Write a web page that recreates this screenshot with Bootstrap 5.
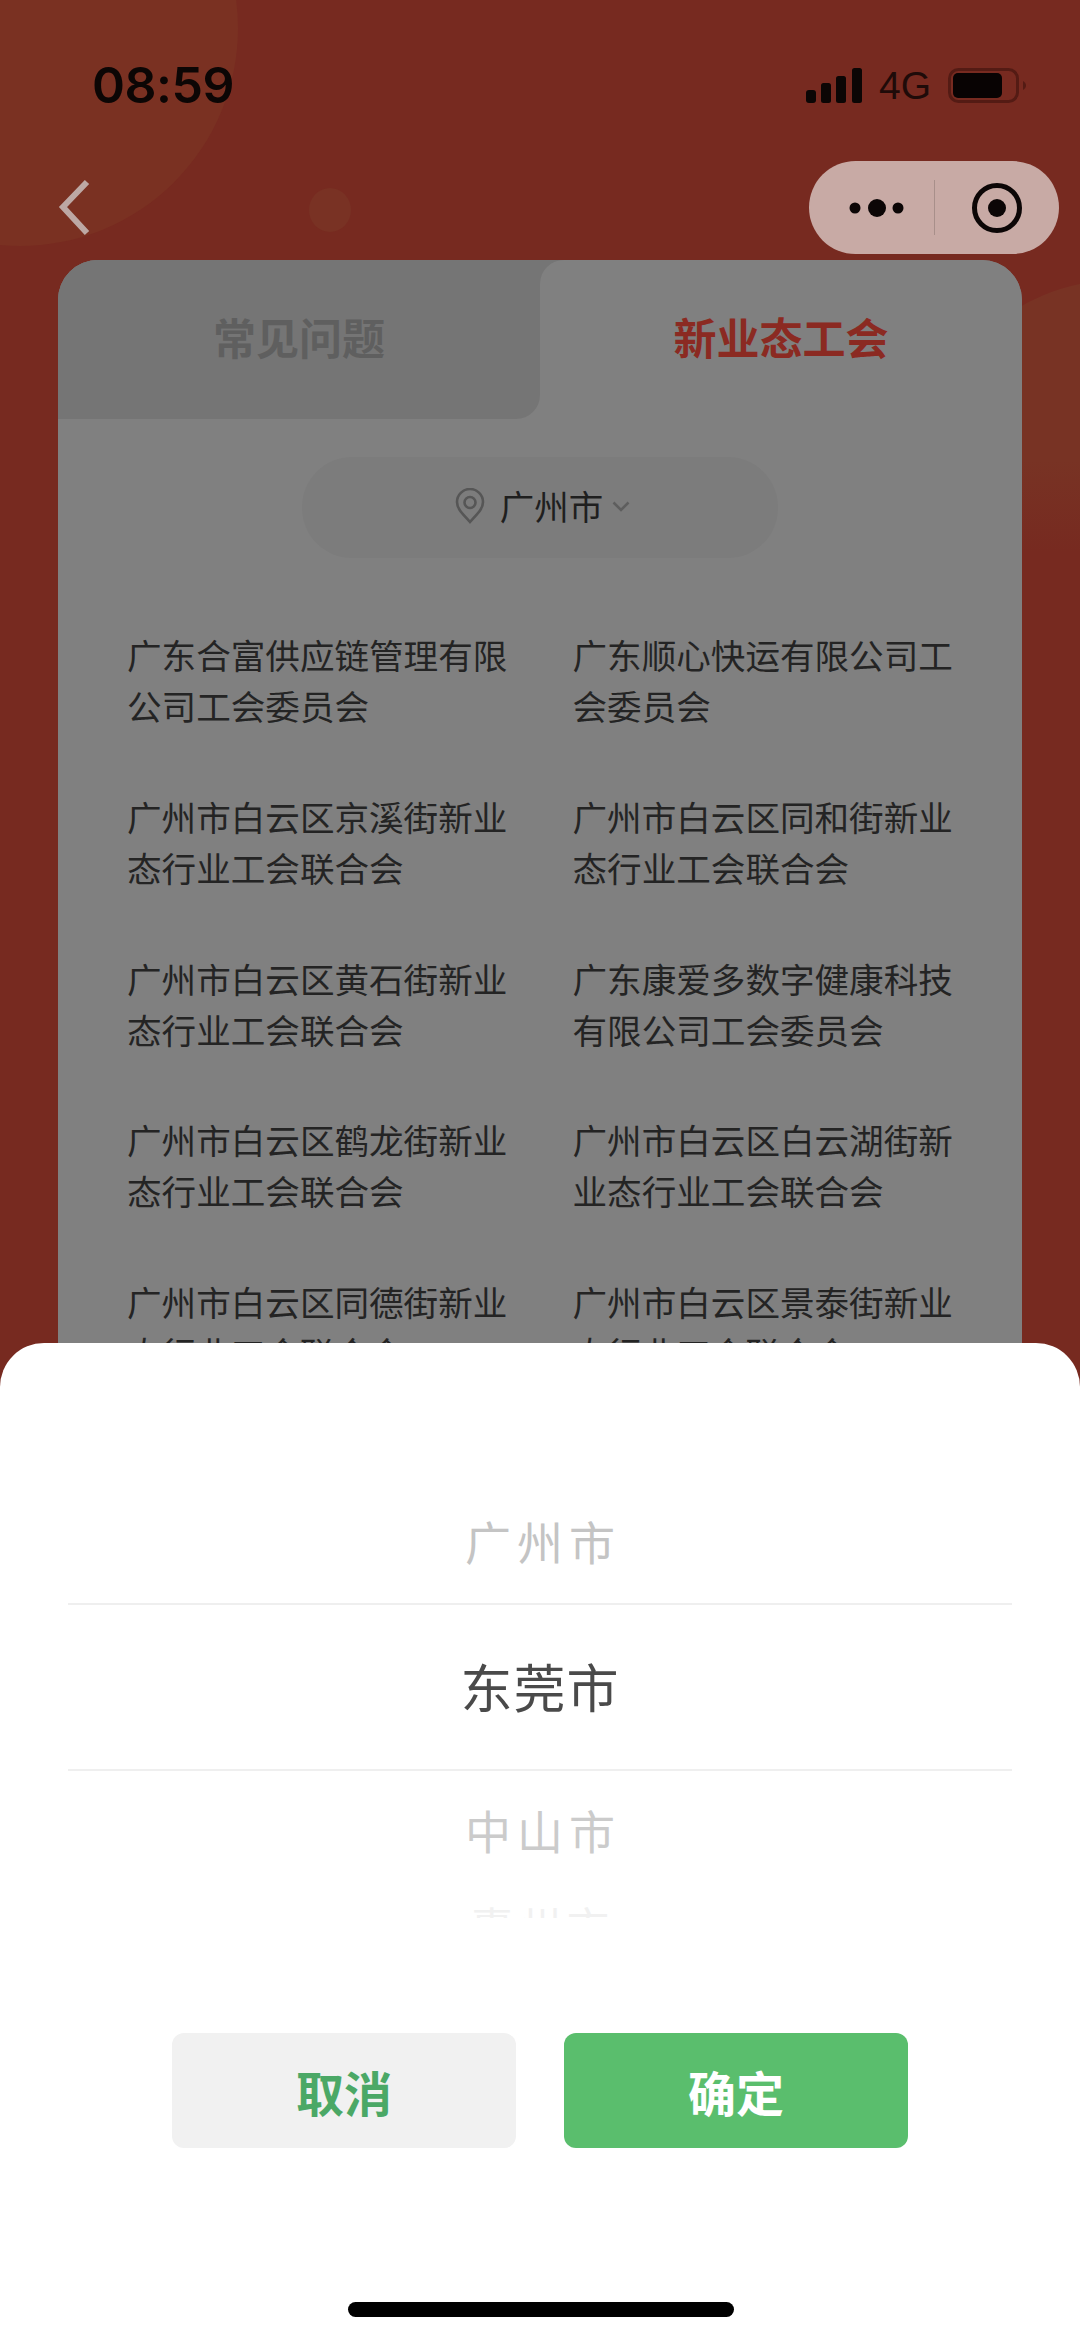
<!doctype html>
<html lang="zh">
<head>
<meta charset="utf-8">
<title>新业态工会</title>
<link href="https://cdn.jsdelivr.net/npm/bootstrap@5.3.0/dist/css/bootstrap.min.css" rel="stylesheet">
<style>
html,body{margin:0;background:#772a20}
.phone{width:1080px;height:2339px;overflow:hidden;position:relative;background:#772a20;font-family:"Noto Sans CJK SC","Liberation Sans",sans-serif}
.deco{position:absolute;border-radius:50%}
.deco-a{width:436px;height:436px;left:-198px;top:-190px;background:#7a3122}
.deco-b{width:42px;height:44px;left:309px;top:188px;background:#793224}
.deco-c{width:400px;height:400px;left:920px;top:280px;background:linear-gradient(#783324 45%,#772a20 68%)}
.status{position:relative;height:161px;padding:9px 54px 0 92px}
.statusgroup{gap:17px}
.clock{font:600 50px/1 Inter,"Liberation Sans",sans-serif;color:#0c0605;letter-spacing:-.5px}
.net{font:400 39px/1 "Liberation Sans",sans-serif;color:#1f0b09}
.navrow{position:relative;height:93px;padding:0 21px 0 58px}
.capsule{width:250px;height:93px;border-radius:47px;background:#c8aaa5}
.capsule-rule{width:1px;height:55px;background:#a88f8a}
.capsule-left{width:125px;padding-left:10px}
.capsule-right{width:124px}
.sheetcard{position:relative;width:964px;height:1500px;margin:6px 0 0 58px;background:#808080;border-radius:40px 40px 0 0;overflow:hidden}
.tabrow{background:linear-gradient(#757575,#757575) left top/520px 40px no-repeat}
.tabside{width:482px;height:159px;font-size:43px;font-weight:700;padding-bottom:6px}
.tab-off{background:#757575;color:#5f5f5f;border-radius:0 0 24px 0}
.tab-on{background:#808080;color:#8b2a22;border-radius:24px 0 0 0}
.citypill{width:476px;height:101px;margin:38px auto 0;border-radius:50px;background:#7c7c7c;font-size:34.500px;color:#1f1f1f;gap:15px;padding:0 0 3px 5px}
.citylabel{gap:9px}
.orglist{padding:71px 4px 0 69px}
.orgitem{height:161.800px;font-size:34.600px;line-height:51px;color:#242424;padding-right:46px}
.popup{position:absolute;left:0;right:0;top:1343px;bottom:0;background:#fff;border-radius:44px 44px 0 0}
.wheel{margin:0 68px;overflow:hidden;position:relative}
.wheelrow{display:flex;align-items:center;justify-content:center}
.w1{height:262px;padding:135px 0 0 6px;font-size:46px;letter-spacing:6px;color:#c4c4c4;border-bottom:2px solid #efefef}
.w2{height:166px;padding-bottom:2px;font-size:52px;color:#4a4a4a;border-bottom:2px solid #efefef;letter-spacing:1px}
.w3{height:122px;padding:0 0 5px 6px;font-size:46px;letter-spacing:6px;color:#cbcbcb}
.w4{height:16px;margin-top:9px;padding-left:6px;overflow:hidden;align-items:flex-start;font-size:42px;letter-spacing:6px;line-height:46px;color:#f1f1f1}
.actbtn{width:344px;height:115px;border-radius:12px;border:0;font-size:48px;font-weight:700;line-height:1;padding:0}
.act-no{background:#f1f1f1;color:#4ba866}
.act-ok{background:#5abe6d;color:#fff}
.actrow{margin-top:115px;gap:48px}
.homebar{position:absolute;left:348px;top:959px;width:386px;height:15px;border-radius:8px;background:#000}
</style>
</head>
<body>
<div class="phone">
  <div class="deco deco-a"></div>
  <div class="deco deco-b"></div>
  <div class="deco deco-c"></div>

  <div class="status d-flex justify-content-between align-items-center">
    <div class="clock">08:59</div>
    <div class="statusgroup d-flex align-items-center">
      <svg width="56" height="35" viewBox="0 0 56 35" aria-hidden="true"><g fill="#0c0605"><rect x="0" y="22" width="10" height="13" rx="3"/><rect x="15" y="15" width="10" height="20" rx="2.5"/><rect x="30" y="8" width="10" height="27" rx="2.5"/><rect x="46" y="0" width="10" height="35" rx="2.5"/></g></svg>
      <div class="net">4G</div>
      <svg width="78" height="35" viewBox="0 0 78 35" aria-hidden="true"><rect x="1.5" y="1.5" width="68" height="32" rx="9" fill="none" stroke="#541b14" stroke-width="3"/><rect x="5" y="5" width="49" height="25" rx="5" fill="#080303"/><path d="M75 13c2 1 3 3 3 4.500s-1 3.500-3 4.500z" fill="#541b14"/></svg>
    </div>
  </div>

  <div class="navrow d-flex justify-content-between align-items-center">
    <svg width="36" height="58" viewBox="0 0 36 58" aria-hidden="true"><path d="M29 3 5 28l24 26" fill="none" stroke="#bda8a4" stroke-width="6"/></svg>
    <div class="capsule d-flex align-items-center">
      <div class="capsule-left d-flex justify-content-center">
        <svg width="62" height="20" viewBox="0 0 62 20" aria-hidden="true"><g fill="#0c0606"><circle cx="9" cy="10" r="5.500"/><circle cx="31" cy="10" r="9"/><circle cx="52" cy="10" r="5.500"/></g></svg>
      </div>
      <div class="capsule-rule"></div>
      <div class="capsule-right d-flex justify-content-center">
        <svg width="52" height="52" viewBox="0 0 52 52" aria-hidden="true"><circle cx="26" cy="26" r="22.500" fill="none" stroke="#0c0606" stroke-width="5"/><circle cx="26" cy="26" r="9" fill="#0c0606"/></svg>
      </div>
    </div>
  </div>

  <div class="sheetcard">
    <div class="tabrow d-flex">
      <div class="tabside tab-off d-flex align-items-center justify-content-center">常见问题</div>
      <div class="tabside tab-on d-flex align-items-center justify-content-center">新业态工会</div>
    </div>
    <div class="citypill d-flex align-items-center justify-content-center">
      <svg width="30" height="36" viewBox="0 0 30 36" aria-hidden="true"><path d="M15 34C8 26 2 21 2 14a13 13 0 0 1 26 0C28 21 22 26 15 34z" fill="none" stroke="#565656" stroke-width="2.600"/><circle cx="15" cy="14.500" r="5.500" fill="none" stroke="#565656" stroke-width="2.600"/></svg>
      <div class="citylabel d-flex align-items-center">广州市
        <svg width="18" height="11" viewBox="0 0 18 11" aria-hidden="true"><path d="m1.500 1.500 7.500 7.500 7.500-7.500" fill="none" stroke="#5e5e5e" stroke-width="2.500"/></svg>
      </div>
    </div>
    <div class="orglist row g-0">
      <div class="col-6 orgitem">广东合富供应链管理有限公司工会委员会</div>
      <div class="col-6 orgitem">广东顺心快运有限公司工会委员会</div>
      <div class="col-6 orgitem">广州市白云区京溪街新业态行业工会联合会</div>
      <div class="col-6 orgitem">广州市白云区同和街新业态行业工会联合会</div>
      <div class="col-6 orgitem">广州市白云区黄石街新业态行业工会联合会</div>
      <div class="col-6 orgitem">广东康爱多数字健康科技有限公司工会委员会</div>
      <div class="col-6 orgitem">广州市白云区鹤龙街新业态行业工会联合会</div>
      <div class="col-6 orgitem">广州市白云区白云湖街新业态行业工会联合会</div>
      <div class="col-6 orgitem">广州市白云区同德街新业态行业工会联合会</div>
      <div class="col-6 orgitem">广州市白云区景泰街新业态行业工会联合会</div>
    </div>
  </div>

  <div class="popup">
    <div class="wheel">
      <div class="wheelrow w1">广州市</div>
      <div class="wheelrow w2">东莞市</div>
      <div class="wheelrow w3">中山市</div>
      <div class="wheelrow w4">惠州市</div>
    </div>
    <div class="actrow d-flex justify-content-center">
      <button type="button" class="btn actbtn act-no">取消</button>
      <button type="button" class="btn actbtn act-ok">确定</button>
    </div>
    <div class="homebar"></div>
  </div>
</div>
<script src="https://cdn.jsdelivr.net/npm/bootstrap@5.3.0/dist/js/bootstrap.bundle.min.js"></script>
</body>
</html>
